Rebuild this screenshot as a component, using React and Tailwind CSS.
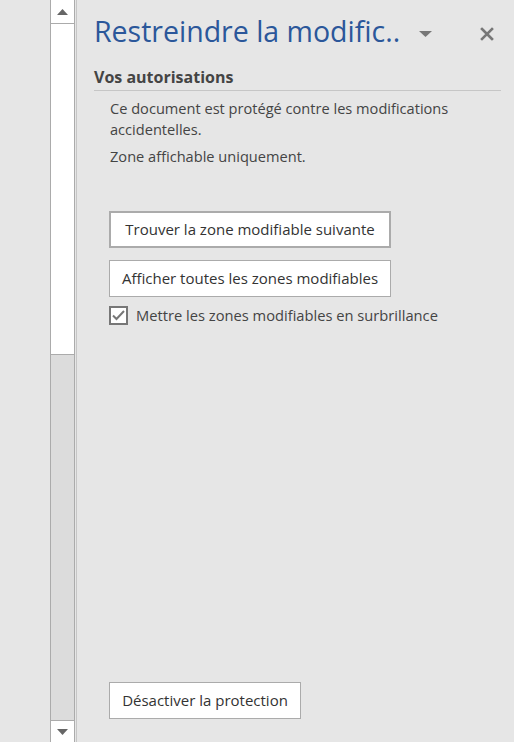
import React from 'react';

const font = { fontFamily: '"Open Sans", "Noto Sans", sans-serif' };

function Btn({ children, thick, className = '' }) {
  return (
    <button
      className={`h-[37px] bg-white text-[15px] text-[#333] ${thick ? 'border-2 border-[#ababab]' : 'border border-[#ababab]'} ${className}`}
    >
      {children}
    </button>
  );
}

export default function App() {
  return (
    <div className="flex h-[742px] w-[514px] overflow-hidden bg-[#e6e6e6]" style={font}>
      {/* Left gutter */}
      <div className="w-[50px] shrink-0" />

      {/* Scrollbar */}
      <div className="flex w-[25px] shrink-0 flex-col border-x border-[#ababab]">
        <div className="flex h-6 shrink-0 items-center justify-center bg-white border-b border-[#ababab]">
          <svg width="11" height="6" viewBox="0 0 11 6"><path d="M5.5 0 L11 6 L0 6 Z" fill="#666" /></svg>
        </div>
        <div className="h-[331px] shrink-0 bg-white border-b border-[#ababab]" />
        <div className="flex-1 bg-[#dcdcdc]" />
        <div className="flex h-[22px] shrink-0 items-center justify-center bg-white border-t border-[#ababab]">
          <svg width="11" height="6" viewBox="0 0 11 6"><path d="M0 0 L11 0 L5.5 6 Z" fill="#666" /></svg>
        </div>
      </div>

      {/* Divider */}
      <div className="ml-px w-px shrink-0 bg-[#c6c6c6]" />

      {/* Task pane */}
      <div className="flex min-w-0 flex-1 flex-col pl-[17px] pr-[13px]">
        <div className="flex h-[67px] items-center pb-1">
          <h1 className="flex-1 whitespace-nowrap text-[28.5px] font-normal leading-none text-[#2b579a]">
            Restreindre la modific..
          </h1>
          <svg className="mr-[48px] mt-1" width="13" height="6" viewBox="0 0 13 6"><path d="M0 0 L13 0 L6.5 6 Z" fill="#777" /></svg>
          <svg className="mr-[7px] mt-1" width="14" height="14" viewBox="0 0 14 14">
            <path d="M2 2 L12 12 M12 2 L2 12" stroke="#777" strokeWidth="2.6" strokeLinecap="square" />
          </svg>
        </div>

        <div className="border-b border-[#c6c6c6] pb-[3px] text-[16px] font-bold leading-5 text-[#444]">
          Vos autorisations
        </div>

        <div className="pl-4 pt-[7px] text-[14.6px] leading-[21px] text-[#444]">
          <p>Ce document est protégé contre les modifications accidentelles.</p>
          <p className="mt-[6px]">Zone affichable uniquement.</p>
        </div>

        <div className="flex flex-col items-start pl-[15px] pt-[44px]">
          <Btn thick className="w-[282px]">Trouver la zone modifiable suivante</Btn>
          <Btn className="mt-3 w-[282px]">Afficher toutes les zones modifiables</Btn>
          <label className="mt-[7px] flex items-center gap-2 text-[14.7px] text-[#444]">
            <span className="flex h-[19px] w-[19px] items-center justify-center border-2 border-[#777] bg-white">
              <svg width="13" height="11" viewBox="0 0 13 11">
                <path d="M1 5.5 L4.5 9 L12 1" fill="none" stroke="#777" strokeWidth="2" />
              </svg>
            </span>
            Mettre les zones modifiables en surbrillance
          </label>
        </div>

        <div className="flex-1" />

        <div className="pb-[23px] pl-[15px]">
          <Btn className="w-[192px]">Désactiver la protection</Btn>
        </div>
      </div>
    </div>
  );
}
